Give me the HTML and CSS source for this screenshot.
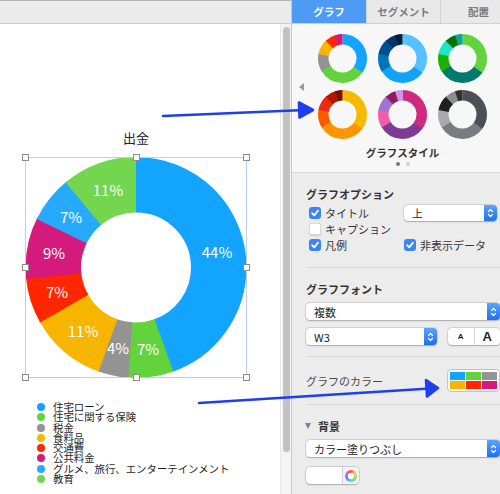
FILE: index.html
```html
<!DOCTYPE html>
<html lang="ja">
<head>
<meta charset="utf-8">
<title>グラフ</title>
<link rel="stylesheet" href="styles.css">
</head>
<body>
<div class="app">
  <div class="doc">
    <div class="toolbar"></div>
    <div class="doc-body">
      <div class="canvas">
        <div class="chart-title">出金</div>
        <svg class="chart" width="232" height="231" viewBox="20 152 232 231">
          <g transform="rotate(-90 136 267.5)" fill="none" stroke-width="55.5">
            <circle cx="136" cy="267.5" r="82.75" pathLength="100" stroke="#12a4fe" stroke-dasharray="44.8 100" stroke-dashoffset="0"/>
            <circle cx="136" cy="267.5" r="82.75" pathLength="100" stroke="#62d33c" stroke-dasharray="6.9 100" stroke-dashoffset="-44.5"/>
            <circle cx="136" cy="267.5" r="82.75" pathLength="100" stroke="#939393" stroke-dasharray="4.7 100" stroke-dashoffset="-51.1"/>
            <circle cx="136" cy="267.5" r="82.75" pathLength="100" stroke="#f8b500" stroke-dasharray="11.5 100" stroke-dashoffset="-55.5"/>
            <circle cx="136" cy="267.5" r="82.75" pathLength="100" stroke="#ff2600" stroke-dasharray="6.9 100" stroke-dashoffset="-66.7"/>
            <circle cx="136" cy="267.5" r="82.75" pathLength="100" stroke="#d41a7c" stroke-dasharray="9.25 100" stroke-dashoffset="-73.3"/>
            <circle cx="136" cy="267.5" r="82.75" pathLength="100" stroke="#25aaff" stroke-dasharray="7.05 100" stroke-dashoffset="-82.25"/>
            <circle cx="136" cy="267.5" r="82.75" pathLength="100" stroke="#74d64e" stroke-dasharray="11 100" stroke-dashoffset="-89"/>
          </g>
          <g class="pct" text-anchor="middle">
            <text x="217" y="258">44%</text>
            <text x="148" y="355">7%</text>
            <text x="118" y="354">4%</text>
            <text x="83" y="337">11%</text>
            <text x="57" y="298">7%</text>
            <text x="54" y="259">9%</text>
            <text x="71" y="223">7%</text>
            <text x="108" y="196">11%</text>
          </g>
          <rect x="25.5" y="157.5" width="221" height="220" fill="none" stroke="#b9cef8"/>
          <g fill="#fff" stroke="#8c8c8c">
            <rect x="22.5" y="154.5" width="6" height="6"/>
            <rect x="133.5" y="154.5" width="6" height="6"/>
            <rect x="243.5" y="154.5" width="6" height="6"/>
            <rect x="22.5" y="264.5" width="6" height="6"/>
            <rect x="243.5" y="264.5" width="6" height="6"/>
            <rect x="22.5" y="374.5" width="6" height="6"/>
            <rect x="133.5" y="374.5" width="6" height="6"/>
            <rect x="243.5" y="374.5" width="6" height="6"/>
          </g>
        </svg>
        <ul class="legend">
          <li><span class="dot c-blue"></span><span class="lt">住宅ローン</span></li>
          <li><span class="dot c-green"></span><span class="lt">住宅に関する保険</span></li>
          <li><span class="dot c-gray"></span><span class="lt">税金</span></li>
          <li><span class="dot c-orange"></span><span class="lt">食料品</span></li>
          <li><span class="dot c-red"></span><span class="lt">交通費</span></li>
          <li><span class="dot c-magenta"></span><span class="lt">公共料金</span></li>
          <li><span class="dot c-lblue"></span><span class="lt">グルメ、旅行、エンターテインメント</span></li>
          <li><span class="dot c-lgreen"></span><span class="lt">教育</span></li>
        </ul>
      </div>
      <div class="gutter"><div class="thumb"></div></div>
    </div>
  </div>

  <aside class="panel">
    <div class="tabs">
      <div class="tab active">グラフ</div>
      <div class="tab">セグメント</div>
      <div class="tab">配置</div>
    </div>

    <section class="styles">
      <span class="pager-prev"></span>
      <div class="styles-col">
        <div class="thumbs">
          <svg class="tn" viewBox="0 0 49 49"><g transform="rotate(-90 24.5 24.5)" fill="none" stroke-width="10.5">
            <circle cx="24.5" cy="24.5" r="19.25" pathLength="100" stroke="#12a4fe" stroke-dasharray="35.4 100"/>
            <circle cx="24.5" cy="24.5" r="19.25" pathLength="100" stroke="#62d33c" stroke-dasharray="31.4 100" stroke-dashoffset="-35"/>
            <circle cx="24.5" cy="24.5" r="19.25" pathLength="100" stroke="#939393" stroke-dasharray="12.4 100" stroke-dashoffset="-66"/>
            <circle cx="24.5" cy="24.5" r="19.25" pathLength="100" stroke="#f8b500" stroke-dasharray="10.4 100" stroke-dashoffset="-78"/>
            <circle cx="24.5" cy="24.5" r="19.25" pathLength="100" stroke="#ff2600" stroke-dasharray="7.4 100" stroke-dashoffset="-88"/>
            <circle cx="24.5" cy="24.5" r="19.25" pathLength="100" stroke="#d41a7c" stroke-dasharray="5 100" stroke-dashoffset="-95"/>
          </g></svg>
          <svg class="tn" viewBox="0 0 49 49"><g transform="rotate(-90 24.5 24.5)" fill="none" stroke-width="10.5">
            <circle cx="24.5" cy="24.5" r="19.25" pathLength="100" stroke="#56c1ff" stroke-dasharray="35.4 100"/>
            <circle cx="24.5" cy="24.5" r="19.25" pathLength="100" stroke="#12a2fa" stroke-dasharray="31.4 100" stroke-dashoffset="-35"/>
            <circle cx="24.5" cy="24.5" r="19.25" pathLength="100" stroke="#0074ba" stroke-dasharray="12.4 100" stroke-dashoffset="-66"/>
            <circle cx="24.5" cy="24.5" r="19.25" pathLength="100" stroke="#00508e" stroke-dasharray="10.4 100" stroke-dashoffset="-78"/>
            <circle cx="24.5" cy="24.5" r="19.25" pathLength="100" stroke="#003566" stroke-dasharray="7.4 100" stroke-dashoffset="-88"/>
            <circle cx="24.5" cy="24.5" r="19.25" pathLength="100" stroke="#001d3e" stroke-dasharray="5 100" stroke-dashoffset="-95"/>
          </g></svg>
          <svg class="tn" viewBox="0 0 49 49"><g transform="rotate(-90 24.5 24.5)" fill="none" stroke-width="10.5">
            <circle cx="24.5" cy="24.5" r="19.25" pathLength="100" stroke="#62d33c" stroke-dasharray="35.4 100"/>
            <circle cx="24.5" cy="24.5" r="19.25" pathLength="100" stroke="#007a6e" stroke-dasharray="31.4 100" stroke-dashoffset="-35"/>
            <circle cx="24.5" cy="24.5" r="19.25" pathLength="100" stroke="#1db100" stroke-dasharray="12.4 100" stroke-dashoffset="-66"/>
            <circle cx="24.5" cy="24.5" r="19.25" pathLength="100" stroke="#1ae6c8" stroke-dasharray="10.4 100" stroke-dashoffset="-78"/>
            <circle cx="24.5" cy="24.5" r="19.25" pathLength="100" stroke="#017100" stroke-dasharray="7.4 100" stroke-dashoffset="-88"/>
            <circle cx="24.5" cy="24.5" r="19.25" pathLength="100" stroke="#0aa394" stroke-dasharray="5 100" stroke-dashoffset="-95"/>
          </g></svg>
          <svg class="tn" viewBox="0 0 49 49"><g transform="rotate(-90 24.5 24.5)" fill="none" stroke-width="10.5">
            <circle cx="24.5" cy="24.5" r="19.25" pathLength="100" stroke="#f8ba00" stroke-dasharray="35.4 100"/>
            <circle cx="24.5" cy="24.5" r="19.25" pathLength="100" stroke="#fe9400" stroke-dasharray="31.4 100" stroke-dashoffset="-35"/>
            <circle cx="24.5" cy="24.5" r="19.25" pathLength="100" stroke="#ff5a00" stroke-dasharray="12.4 100" stroke-dashoffset="-66"/>
            <circle cx="24.5" cy="24.5" r="19.25" pathLength="100" stroke="#ec2a12" stroke-dasharray="10.4 100" stroke-dashoffset="-78"/>
            <circle cx="24.5" cy="24.5" r="19.25" pathLength="100" stroke="#b31600" stroke-dasharray="7.4 100" stroke-dashoffset="-88"/>
            <circle cx="24.5" cy="24.5" r="19.25" pathLength="100" stroke="#7a1000" stroke-dasharray="5 100" stroke-dashoffset="-95"/>
          </g></svg>
          <svg class="tn" viewBox="0 0 49 49"><g transform="rotate(-90 24.5 24.5)" fill="none" stroke-width="10.5">
            <circle cx="24.5" cy="24.5" r="19.25" pathLength="100" stroke="#cf2a80" stroke-dasharray="35.4 100"/>
            <circle cx="24.5" cy="24.5" r="19.25" pathLength="100" stroke="#7e3b95" stroke-dasharray="31.4 100" stroke-dashoffset="-35"/>
            <circle cx="24.5" cy="24.5" r="19.25" pathLength="100" stroke="#ee5fa8" stroke-dasharray="12.4 100" stroke-dashoffset="-66"/>
            <circle cx="24.5" cy="24.5" r="19.25" pathLength="100" stroke="#a174d0" stroke-dasharray="10.4 100" stroke-dashoffset="-78"/>
            <circle cx="24.5" cy="24.5" r="19.25" pathLength="100" stroke="#95195e" stroke-dasharray="7.4 100" stroke-dashoffset="-88"/>
            <circle cx="24.5" cy="24.5" r="19.25" pathLength="100" stroke="#c796ea" stroke-dasharray="5 100" stroke-dashoffset="-95"/>
          </g></svg>
          <svg class="tn" viewBox="0 0 49 49"><g transform="rotate(-90 24.5 24.5)" fill="none" stroke-width="10.5">
            <circle cx="24.5" cy="24.5" r="19.25" pathLength="100" stroke="#4c5056" stroke-dasharray="35.4 100"/>
            <circle cx="24.5" cy="24.5" r="19.25" pathLength="100" stroke="#787c82" stroke-dasharray="31.4 100" stroke-dashoffset="-35"/>
            <circle cx="24.5" cy="24.5" r="19.25" pathLength="100" stroke="#a8abae" stroke-dasharray="12.4 100" stroke-dashoffset="-66"/>
            <circle cx="24.5" cy="24.5" r="19.25" pathLength="100" stroke="#202020" stroke-dasharray="10.4 100" stroke-dashoffset="-78"/>
            <circle cx="24.5" cy="24.5" r="19.25" pathLength="100" stroke="#8b8f95" stroke-dasharray="7.4 100" stroke-dashoffset="-88"/>
            <circle cx="24.5" cy="24.5" r="19.25" pathLength="100" stroke="#303030" stroke-dasharray="5 100" stroke-dashoffset="-95"/>
          </g></svg>
        </div>
        <div class="styles-label">グラフスタイル</div>
        <div class="page-dots"><span class="pd on"></span><span class="pd"></span></div>
      </div>
    </section>

    <section class="options">
      <h3 class="sec-h">グラフオプション</h3>
      <div class="opt-grid">
        <label class="chk"><span class="cb on"><svg viewBox="0 0 12 12"><path d="M3 6.2 L5.2 8.4 L9 3.6"/></svg></span>タイトル</label>
        <div class="popup w-top"><span class="popup-text">上</span><span class="stepper"><svg viewBox="0 0 7 12"><path d="M1.5 4.5 L3.5 2.5 L5.5 4.5 M1.5 7.5 L3.5 9.5 L5.5 7.5"/></svg></span></div>
        <label class="chk"><span class="cb"></span>キャプション</label>
        <div></div>
        <label class="chk"><span class="cb on"><svg viewBox="0 0 12 12"><path d="M3 6.2 L5.2 8.4 L9 3.6"/></svg></span>凡例</label>
        <label class="chk chk2"><span class="cb on"><svg viewBox="0 0 12 12"><path d="M3 6.2 L5.2 8.4 L9 3.6"/></svg></span>非表示データ</label>
      </div>

      <hr class="div">

      <h3 class="sec-h">グラフフォント</h3>
      <div class="popup full mt6"><span class="popup-text">複数</span><span class="stepper"><svg viewBox="0 0 7 12"><path d="M1.5 4.5 L3.5 2.5 L5.5 4.5 M1.5 7.5 L3.5 9.5 L5.5 7.5"/></svg></span></div>
      <div class="font-row">
        <div class="popup w-font"><span class="popup-text">W3</span><span class="stepper"><svg viewBox="0 0 7 12"><path d="M1.5 4.5 L3.5 2.5 L5.5 4.5 M1.5 7.5 L3.5 9.5 L5.5 7.5"/></svg></span></div>
        <div class="seg"><span class="seg-btn small">A</span><span class="seg-btn big">A</span></div>
      </div>

      <hr class="div div2">

      <div class="color-row">
        <span class="color-label">グラフのカラー</span>
        <div class="swatch">
          <span class="c-blue"></span><span class="c-green"></span><span class="c-gray"></span>
          <span class="c-orange"></span><span class="c-red"></span><span class="c-magenta"></span>
        </div>
      </div>

      <hr class="div div3">

      <h3 class="sec-h bg-h"><span class="disclosure"></span>背景</h3>
      <div class="popup full mt7"><span class="popup-text">カラー塗りつぶし</span><span class="stepper"><svg viewBox="0 0 7 12"><path d="M1.5 4.5 L3.5 2.5 L5.5 4.5 M1.5 7.5 L3.5 9.5 L5.5 7.5"/></svg></span></div>
      <div class="well"><span class="well-color"></span><span class="well-btn"><span class="wheel"></span></span></div>
    </section>
  </aside>
</div>

<svg class="annot" width="500" height="494" viewBox="0 0 500 494">
  <g stroke="#1f3fef" stroke-width="2.6" stroke-linecap="round" stroke-linejoin="round" fill="#1f3fef">
    <path d="M163 116 Q240 113 305 110" fill="none"/>
    <path d="M299 102.5 L313 110 L299.5 117.5 Z"/>
    <path d="M199 403 Q320 395 430 388.5" fill="none"/>
    <path d="M426 380 L438 388 L427 396.5 Z"/>
  </g>
</svg>
</body>
</html>
```

FILE: styles.css
```css
* { box-sizing: border-box; }
html, body { margin: 0; padding: 0; }
body {
  width: 500px;
  height: 494px;
  overflow: hidden;
  position: relative;
  font-family: "Noto Sans CJK JP", "Noto Sans", sans-serif;
  font-size: 11px;
  color: #222;
  background: #fff;
}
.app { display: flex; width: 500px; height: 494px; }

/* document side */
.doc {
  width: 292px;
  flex: none;
  display: flex;
  flex-direction: column;
  border-right: 1px solid #c9c9c9;
}
.toolbar {
  height: 24px;
  flex: none;
  background: #ebebeb;
  border-top: 1px solid #b4b4b4;
  border-bottom: 1px solid #cdcdcd;
}
.doc-body { flex: 1; display: flex; min-height: 0; }
.canvas {
  flex: 1;
  background: #fff;
  padding-top: 106px;
  display: flex;
  flex-direction: column;
}
.gutter {
  width: 11px;
  flex: none;
  background: #f4f4f4;
  border-left: 1px solid #e8e8e8;
  padding: 3px 0 0 2px;
}
.thumb {
  width: 7px;
  height: 425px;
  border-radius: 4px;
  background: #c2c2c2;
}
.chart-title {
  width: 222px;
  margin-left: 25px;
  text-align: center;
  font-size: 13px;
  line-height: 16px;
  color: #222;
}
.chart { display: block; margin: 6px 0 0 20px; overflow: visible; }
.pct text {
  fill: #fff;
  font-family: "Noto Sans CJK JP", "Noto Sans", sans-serif;
  font-size: 15px;
}
.legend {
  list-style: none;
  margin: 19px 0 0 37px;
  padding: 0;
}
.legend li {
  display: flex;
  align-items: center;
  height: 10.25px;
  white-space: nowrap;
}
.lt {
  font-size: 10.4px;
  line-height: 10.25px;
  color: #1e1e1e;
}
.dot {
  width: 8px;
  height: 8px;
  border-radius: 50%;
  margin-right: 8px;
  flex: none;
}
.c-blue { background: #12a4fe; }
.c-green { background: #62d33c; }
.c-gray { background: #939393; }
.c-orange { background: #f8b500; }
.c-red { background: #ff2600; }
.c-magenta { background: #d41a7c; }
.c-lblue { background: #25aaff; }
.c-lgreen { background: #74d64e; }

/* inspector panel */
.panel {
  width: 208px;
  flex: none;
  background: #ececec;
  overflow: hidden;
  display: flex;
  flex-direction: column;
}
.tabs {
  height: 24px;
  flex: none;
  display: flex;
  border-bottom: 1px solid #d0d0d0;
  background: #e9e9e9;
}
.tab {
  width: 74px;
  flex: none;
  display: flex;
  align-items: center;
  justify-content: center;
  color: #7b7b7b;
  font-weight: 700;
  font-size: 10.5px;
  border-left: 1px solid #d3d3d3;
}
.tab:last-child { width: 76px; }
.tab.active {
  background: #4d9bf5;
  color: #fff;
  border-left: none;
}
.styles {
  position: relative;
  background: #f7f7f7;
  border-bottom: 1px solid #d9d9d9;
  height: 149px;
  flex: none;
  padding: 10px 0 0 26px;
}
.pager-prev {
  position: absolute;
  left: 7px;
  top: 59px;
  width: 0;
  height: 0;
  border-top: 4px solid transparent;
  border-bottom: 4px solid transparent;
  border-right: 5px solid #9a9a9a;
}
.styles-col {
  width: 169px;
  display: flex;
  flex-direction: column;
  align-items: center;
}
.thumbs {
  display: grid;
  grid-template-columns: repeat(3, 49px);
  gap: 6.5px 11px;
}
.tn { width: 49px; height: 49px; display: block; }
.styles-label {
  margin-top: 7px;
  font-weight: 700;
  font-size: 10.5px;
  line-height: 14px;
  color: #333;
}
.page-dots { display: flex; gap: 6px; margin-top: 2px; padding-left: 1px; }
.pd { width: 4px; height: 4px; border-radius: 50%; background: #cdcdcd; }
.pd.on { background: #7a7a7a; }

.options { padding: 14px 0 0 14px; }
.sec-h {
  margin: 0;
  font-size: 11px;
  line-height: 14px;
  font-weight: 700;
  color: #333;
}
.opt-grid {
  margin-top: 4px;
  display: grid;
  grid-template-columns: 98px 94px;
  grid-auto-rows: 16px;
  align-items: center;
}
.chk {
  display: flex;
  align-items: center;
  gap: 4px;
  padding-left: 3px;
  color: #333;
  font-size: 11px;
  line-height: 16px;
}
.chk2 { padding-left: 0; }
.cb {
  width: 12px;
  height: 12px;
  border-radius: 3px;
  background: #fff;
  box-shadow: inset 0 0 0 0.5px #b9b9b9, 0 0.5px 1px rgba(0,0,0,0.15);
  display: flex;
  flex: none;
}
.cb.on { background: #3a85f6; box-shadow: none; }
.cb svg { width: 12px; height: 12px; }
.cb path { fill: none; stroke: #fff; stroke-width: 1.7; stroke-linecap: round; stroke-linejoin: round; }

.popup {
  height: 16px;
  display: flex;
  align-items: center;
  justify-content: space-between;
  background: #fff;
  border-radius: 4px;
  box-shadow: 0 0 0 0.5px rgba(0,0,0,0.16), 0 0.5px 1.5px rgba(0,0,0,0.22);
}
.popup-text { padding-left: 8px; font-size: 11px; color: #222; }
.stepper {
  width: 13px;
  height: 100%;
  border-radius: 0 4px 4px 0;
  background: linear-gradient(#5ba4fa, #1f6ff1);
  display: flex;
  align-items: center;
  justify-content: center;
}
.stepper svg { width: 7px; height: 12px; }
.stepper path { fill: none; stroke: #fff; stroke-width: 1.2; stroke-linecap: round; stroke-linejoin: round; }
.w-top { width: 93px; }
.full { width: 194px; height: 17px; }
.mt6 { margin-top: 7px; }
.mt7 { margin-top: 7px; }
.font-row {
  margin-top: 8px;
  display: flex;
  gap: 11px;
  height: 17px;
}
.w-font { width: 131px; height: 17px; }
.seg {
  width: 52px;
  display: flex;
  background: #fff;
  border-radius: 4px;
  box-shadow: 0 0 0 0.5px rgba(0,0,0,0.16), 0 0.5px 1.5px rgba(0,0,0,0.22);
}
.seg-btn {
  flex: 1;
  display: flex;
  align-items: center;
  justify-content: center;
  font-family: "Liberation Sans", sans-serif;
  font-weight: 700;
  color: #222;
}
.seg-btn.small { font-size: 8px; border-right: 1px solid #d6d6d6; }
.seg-btn.big { font-size: 13px; }

.div {
  border: none;
  border-top: 1px solid #d6d6d6;
  margin: 14px 0 14px 0;
  height: 0;
}
.div2 { margin: 11px 0 12px 0; }
.div3 { margin: 12px 0 14px 0; }
.color-row {
  display: flex;
  align-items: center;
  justify-content: space-between;
  height: 23px;
}
.color-label { color: #4a4a4a; font-size: 11px; padding-top: 1px; }
.swatch {
  width: 53px;
  height: 23px;
  padding: 2px;
  background: #fafafa;
  border: 1px solid #c4c4c4;
  border-radius: 4px;
  display: grid;
  grid-template-columns: repeat(3, 15px);
  grid-template-rows: repeat(2, 8px);
  gap: 1px;
}
.bg-h { display: flex; align-items: center; }
.disclosure {
  width: 0;
  height: 0;
  margin: 0 7px 0 -1px;
  border-left: 3.5px solid transparent;
  border-right: 3.5px solid transparent;
  border-top: 6px solid #808080;
}
.well {
  margin-top: 10px;
  width: 53px;
  height: 17px;
  display: flex;
  background: #fff;
  border-radius: 4px;
  box-shadow: 0 0 0 0.5px rgba(0,0,0,0.2), 0 0.5px 1.5px rgba(0,0,0,0.2);
  overflow: hidden;
}
.well-color { width: 37px; border-right: 1px solid #d2d2d2; }
.well-btn {
  flex: 1;
  background: #f3f3f3;
  display: flex;
  align-items: center;
  justify-content: center;
}
.wheel {
  width: 12px;
  height: 12px;
  border-radius: 50%;
  background:
    radial-gradient(circle, #fff 0 3px, transparent 3.6px),
    conic-gradient(#ff4d4d, #ffd24d, #6fe06f, #4de0e0, #6b7dff, #e05ee0, #ff4d4d);
}

.annot {
  position: absolute;
  left: 0;
  top: 0;
  pointer-events: none;
}
```
